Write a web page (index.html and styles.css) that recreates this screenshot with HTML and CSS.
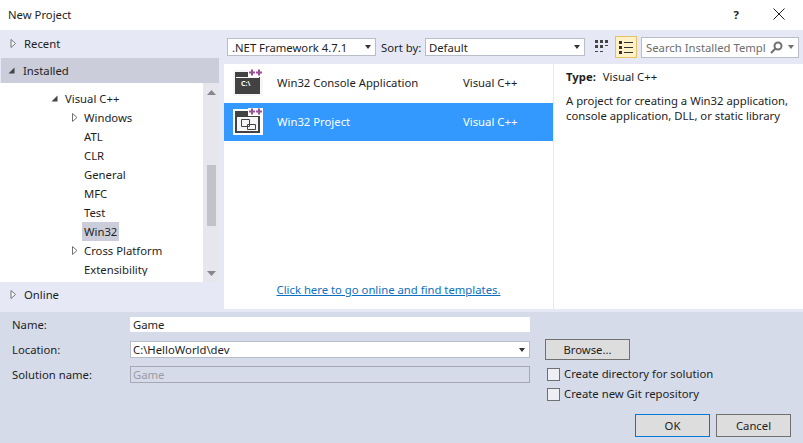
FILE: index.html
```html
<!DOCTYPE html>
<html>
	<head>
		<meta charset="UTF-8">
		<title>New Project</title>
		<link rel="stylesheet" href="styles.css">
	</head>
	<body>
		<div class="dialog">
			<div class="titlebar">
				<span class="title">New Project</span>
				<span class="help">?</span>
				<svg class="close" width="12" height="12" viewBox="0 0 12 12"><path d="M.5.5l11 11M11.500.5l-11 11" stroke="#1e1e1e" fill="none"/></svg>
			</div>
			<div class="main">
				<div class="nav">
					<div class="navItem">
						<svg class="arrow" width="6" height="9" viewBox="0 0 6 9"><path d="M.5.5v8l4.500-4z" fill="#fff" stroke="#717171"/></svg>
						<span>Recent</span>
					</div>
					<div class="navItem navOpen">
						<svg class="arrow" width="7" height="7" viewBox="0 0 7 7"><path d="M6.500.5v6h-6z" fill="#444"/></svg>
						<span>Installed</span>
					</div>
					<div class="treeWrap">
						<ul class="tree">
							<li class="lvl1"><svg width="7" height="7" viewBox="0 0 7 7"><path d="M6.500.5v6h-6z" fill="#444"/></svg><span>Visual C++</span></li>
							<li class="lvl2"><svg width="6" height="9" viewBox="0 0 6 9"><path d="M.5.5v8l4.500-4z" fill="#fff" stroke="#717171"/></svg><span>Windows</span></li>
							<li class="lvl2"><span>ATL</span></li>
							<li class="lvl2"><span>CLR</span></li>
							<li class="lvl2"><span>General</span></li>
							<li class="lvl2"><span>MFC</span></li>
							<li class="lvl2"><span>Test</span></li>
							<li class="lvl2"><span class="picked">Win32</span></li>
							<li class="lvl2"><svg width="6" height="9" viewBox="0 0 6 9"><path d="M.5.5v8l4.500-4z" fill="#fff" stroke="#717171"/></svg><span>Cross Platform</span></li>
							<li class="lvl2"><span>Extensibility</span></li>
						</ul>
						<div class="scrollbar">
							<svg width="9" height="5" viewBox="0 0 9 5"><path d="M4.500 0l4.500 5h-9z" fill="#86868c"/></svg>
							<div class="track"><div class="thumb"></div></div>
							<svg width="9" height="5" viewBox="0 0 9 5"><path d="M0 0h9l-4.500 5z" fill="#86868c"/></svg>
						</div>
					</div>
					<div class="navItem navLast">
						<svg class="arrow" width="6" height="9" viewBox="0 0 6 9"><path d="M.5.5v8l4.500-4z" fill="#fff" stroke="#717171"/></svg>
						<span>Online</span>
					</div>
				</div>
				<div class="content">
					<div class="toolbar">
						<div class="combo comboFw"><span>.NET Framework 4.7.1</span><i class="caret"></i></div>
						<span class="sortLabel">Sort by:</span>
						<div class="combo comboSort"><span>Default</span><i class="caret"></i></div>
						<svg class="gridIcon" width="13" height="14" viewBox="0 0 13 14"><path d="M0 0h3v3H0zM5 0h3v3H5zM10 0h3v3h-3zM0 5h3v3H0zM5 5h3v3H5zM10 5h3v1h-3zM0 11h3v1H0zM5 11h3v1H5z" fill="#444"/></svg>
						<div class="listBtn">
							<svg width="14" height="13" viewBox="0 0 14 13"><path d="M0 0h3v3H0zM0 5h3v3H0zM0 10h3v3H0z" fill="#333"/><path d="M5 1h9v1H5zM5 6h9v1H5zM5 11h9v1H5z" fill="#333"/></svg>
						</div>
						<div class="search">
							<span class="searchText">Search Installed Templ</span>
							<svg width="13" height="13" viewBox="0 0 13 13"><circle cx="8" cy="5" r="3.500" fill="none" stroke="#717171" stroke-width="2"/><path d="M5.500 7.500L1 12" stroke="#717171" stroke-width="2.200"/></svg>
							<i class="caret caretGrey"></i>
						</div>
					</div>
					<div class="panes">
						<div class="list">
							<div class="row rowFirst">
								<svg class="tplIcon" width="30" height="30" viewBox="0 0 30 30">
									<path d="M0 1h30v26H0z" fill="#f6f6f6"/>
									<path d="M2 3h25v22H2z" fill="#424242"/>
									<path d="M3 8h23v1H3z" fill="#f6f6f6"/>
									<text class="prompt" x="8" y="17">C:\</text>
									<path d="M15 0h15v8H15z" fill="#fff"/>
									<path d="M19 0.500v6M16 3.500h6M26 0.500v6M23 3.500h6" stroke="#9b4f96" stroke-width="2"/>
								</svg>
								<span class="rowName">Win32 Console Application</span>
								<span class="rowLang">Visual C++</span>
							</div>
							<div class="row rowSel">
								<svg class="tplIcon" width="30" height="30" viewBox="0 0 30 30">
									<path d="M0 2h30v26H0z" fill="#fff"/>
									<path d="M2 4h25v22H2z" fill="#424242"/>
									<path d="M4 10h21v14H4z" fill="#f6f6f6"/>
									<path d="M8.500 12.500h8v7h-8zM14.500 17.500h8v5h-8z" fill="#f6f6f6" stroke="#424242"/>
									<path d="M15 1h15v8H15z" fill="#fff"/>
									<path d="M19 1.500v6M16 4.500h6M26 1.500v6M23 4.500h6" stroke="#9b4f96" stroke-width="2"/>
								</svg>
								<span class="rowName">Win32 Project</span>
								<span class="rowLang">Visual C++</span>
							</div>
							<a class="onlineLink" href="#">Click here to go online and find templates.</a>
						</div>
						<div class="details">
							<p class="typeLine"><b>Type:</b><span>Visual C++</span></p>
							<p class="desc">A project for creating a Win32 application,<br>console application, DLL, or static library</p>
						</div>
					</div>
				</div>
			</div>
			<div class="bottom">
				<div class="formRow">
					<div class="fields">
						<label class="field fieldName"><span>Name:</span><div class="box boxName">Game</div></label>
						<label class="field fieldLoc"><span>Location:</span><div class="box boxLoc">C:\HelloWorld\dev<i class="caret"></i></div></label>
						<label class="field fieldSol"><span>Solution name:</span><div class="box boxSol">Game</div></label>
					</div>
					<div class="side">
						<button class="btn btnBrowse">Browse...</button>
						<div class="check"><i></i><span>Create directory for solution</span></div>
						<div class="check"><i></i><span>Create new Git repository</span></div>
					</div>
				</div>
				<div class="footer">
					<button class="btn btnMain btnOk">OK</button>
					<button class="btn btnMain">Cancel</button>
				</div>
			</div>
		</div>
	</body>
</html>
```

FILE: styles.css
```css
*{
	margin:0;
	padding:0;
	box-sizing:border-box;
}
html,body{
	width:803px;
	height:443px;
	overflow:hidden;
	background:#fff;
}
body{
	font-family:"Noto Sans","Open Sans",sans-serif;
	font-size:11.3px;
	color:#1e1e1e;
}
.dialog{
	display:flex;
	flex-direction:column;
	height:443px;
}
.titlebar{
	display:flex;
	align-items:center;
	height:30px;
	padding:0 18px 2px 8px;
}
.title{
	flex:1;
}
.help{
	font-weight:700;
	margin-right:34px;
}
.main{
	display:flex;
	height:282px;
	background:#e6e9f5;
	padding-bottom:3px;
}
.nav{
	display:flex;
	flex-direction:column;
	width:224px;
	padding-right:5px;
}
.navItem{
	display:flex;
	align-items:center;
	height:28px;
	padding:0 0 2px 10px;
}
.navItem .arrow{
	margin-right:7px;
}
.navItem svg{
	width:7px;
}
.navOpen{
	height:25px;
	margin-left:1px;
	padding:0 0 0 7px;
	background:#cbcdda;
}
.navOpen .arrow{
	margin-right:8px;
}
.navLast{
	height:27px;
	background:#e6e9f5;
}
.treeWrap{
	display:flex;
	height:199px;
	background:#fff;
}
.tree{
	flex:1;
	align-self:flex-start;
	height:193px;
	list-style:none;
	overflow:hidden;
	padding-top:6px;
}
.tree li{
	display:flex;
	align-items:center;
	height:19px;
	white-space:nowrap;
}
.lvl1{
	padding-left:51px;
}
.lvl1 svg{
	margin-right:7px;
}
.lvl2{
	padding-left:84px;
}
.lvl2 svg{
	margin-left:-12px;
	margin-right:6px;
}
.picked{
	background:#cbcdda;
	padding:0 2px;
	margin-left:-2px;
	height:19px;
	line-height:19px;
}
.scrollbar{
	display:flex;
	flex-direction:column;
	align-items:center;
	justify-content:space-between;
	width:16px;
	padding:7px 0 6px;
	background:#e6e6ec;
}
.track{
	flex:1;
	width:9px;
	margin-top:8px;
}
.thumb{
	width:9px;
	height:61px;
	margin-top:62px;
	background:#c2c3c9;
}
.content{
	flex:1;
	display:flex;
	flex-direction:column;
}
.toolbar{
	display:flex;
	align-items:center;
	height:34px;
	padding-left:3px;
}
.combo{
	display:flex;
	align-items:center;
	justify-content:space-between;
	height:18px;
	background:#fff;
	border:1px solid #b9bcc9;
	padding:0 4px;
}
.comboFw{
	width:149px;
}
.comboSort{
	width:160px;
	padding-left:3px;
}
.caret{
	width:0;
	height:0;
	border-left:3.500px solid transparent;
	border-right:3.500px solid transparent;
	border-top:4px solid #333;
}
.caretGrey{
	border-top-color:#717171;
	margin-left:5px;
}
.sortLabel{
	margin-left:5px;
	width:44px;
}
.gridIcon{
	margin-left:10px;
}
.listBtn{
	display:flex;
	align-items:center;
	justify-content:center;
	width:22px;
	height:22px;
	margin-left:7px;
	background:#fef1c8;
	border:1px solid #e5c365;
}
.search{
	display:flex;
	align-items:center;
	width:158px;
	height:21px;
	margin-left:4px;
	background:#fff;
	border:1px solid #b9bcc9;
	padding:0 4px;
}
.searchText{
	flex:1;
	color:#6d6d6d;
	white-space:nowrap;
	overflow:hidden;
	width:120px;
}
.panes{
	flex:1;
	display:flex;
	min-height:0;
}
.list{
	position:relative;
	width:330px;
	background:#fff;
	border-right:1px solid #e6e9f5;
}
.row{
	display:flex;
	align-items:center;
	height:38px;
	padding-left:9px;
}
.rowFirst{
	height:39px;
}
.rowSel{
	background:#3399ff;
	color:#fff;
}
.tplIcon{
	margin-right:14px;
}
.prompt{
	font-size:7px;
	font-weight:700;
	fill:#fff;
}
.rowName{
	width:186px;
	white-space:nowrap;
	padding-bottom:2px;
}
.rowLang{
	padding-bottom:2px;
}
.onlineLink{
	position:absolute;
	left:0;
	right:0;
	top:218px;
	text-align:center;
	color:#0e70c0;
}
.details{
	flex:1;
	background:#fff;
	padding:5px 12px 0;
	white-space:nowrap;
}
.typeLine{
	display:flex;
	gap:7px;
	margin-bottom:9px;
}
.desc{
	line-height:15px;
}
.bottom{
	flex:1;
	display:flex;
	flex-direction:column;
	justify-content:space-between;
	background:#d6dbe9;
	padding:5px 12px 6px;
}
.formRow{
	display:flex;
}
.fields{
	display:flex;
	flex-direction:column;
	width:518px;
}
.field{
	display:flex;
	align-items:center;
}
.field span{
	width:118px;
}
.box{
	position:relative;
	flex:1;
	display:flex;
	align-items:center;
	padding-left:3px;
	background:#fff;
}
.fieldName .box{
	height:15px;
}
.fieldLoc{
	margin-top:9px;
}
.boxLoc{
	height:17px;
	border:1px solid #b9bcc9;
	padding-left:2px;
	justify-content:space-between;
	padding-right:4px;
}
.fieldSol{
	margin-top:8px;
}
.boxSol{
	height:17px;
	background:#d6dbe9;
	border:1px solid #a6a9b3;
	padding-left:2px;
	color:#9a9ca5;
}
.side{
	display:flex;
	flex-direction:column;
	margin-left:15px;
	padding-top:22px;
}
.btn{
	font:inherit;
	color:inherit;
	background:#dddddd;
	border:1px solid #707070;
}
.btnBrowse{
	width:85px;
	height:21px;
	margin-bottom:8px;
}
.check{
	display:flex;
	align-items:center;
	height:13px;
	margin:0 0 7px 2px;
}
.check i{
	width:13px;
	height:13px;
	background:#eeeff4;
	border:1px solid #707070;
	margin-right:4px;
}
.check span{
	padding-bottom:2px;
}
.footer{
	display:flex;
	justify-content:flex-end;
	gap:6px;
}
.btnMain{
	width:75px;
	height:23px;
}
.btnOk{
	border-color:#0078d7;
}
```
